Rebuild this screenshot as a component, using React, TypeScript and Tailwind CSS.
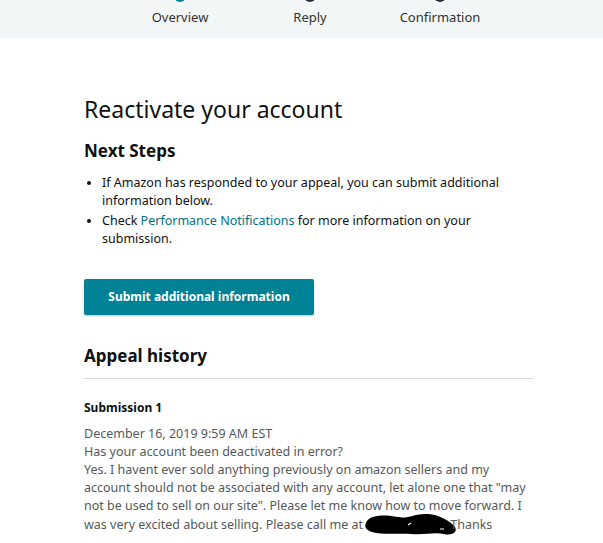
import React from "react";

const steps = [
  { label: "Overview", active: true },
  { label: "Reply", active: false },
  { label: "Confirmation", active: false },
];

function Redaction() {
  return (
    <svg
      className="inline-block align-middle -ml-[2px] -mr-[8px] -mt-[4px]"
      width="94"
      height="26"
      viewBox="0 0 94 26"
    >
      <path
        d="M2 12 C4 4 20 3 34 6 C44 8 52 2 64 3 C76 4 86 10 91 16 C94 21 88 25 80 23 C70 21 60 24 48 23 C34 22 18 24 8 21 C2 19 0 16 2 12 Z"
        fill="#000"
      />
      <path d="M44 14 L47 12" stroke="#fff" strokeWidth="1.2" />
      <path d="M76 18 L80 18" stroke="#fff" strokeWidth="1" />
    </svg>
  );
}

export default function App() {
  return (
    <div
      className="w-full min-h-screen bg-white text-[#0f1111] overflow-hidden"
      style={{ fontFamily: '"Noto Sans", "Open Sans", Arial, sans-serif' }}
    >
      {/* progress header */}
      <div className="h-[38px] bg-[#f3f6f6] flex pl-[115px]">
        {steps.map((s) => (
          <div key={s.label} className="w-[130px] flex flex-col items-center">
            <div
              className={`w-3 h-3 rounded-full -mt-[10px] ${
                s.active ? "bg-[#008296]" : "bg-[#232f3e]"
              }`}
            />
            <div className="mt-[6px] text-[13px] leading-[18px] text-[#333]">{s.label}</div>
          </div>
        ))}
      </div>

      <div className="px-[84px] w-[455px] box-content pt-[55px]">
        <h1 className="text-[23px] leading-[32px] font-normal text-[#111]">Reactivate your account</h1>

        <h2 className="mt-[14px] text-[17px] leading-[24px] font-bold text-[#0f1111]">Next Steps</h2>

        <ul className="mt-[11px] w-[450px] pl-[18px] list-disc text-[12.5px] leading-[18px] text-[#111] space-y-[2px]">
          <li>If Amazon has responded to your appeal, you can submit additional information below.</li>
          <li>
            Check <span className="text-[#007185]">Performance Notifications</span> for more information on your
            submission.
          </li>
        </ul>

        <button className="mt-[31px] w-[230px] h-[36px] rounded-[2px] bg-[#008296] text-white text-[12px] font-bold shadow-[0_1px_2px_rgba(0,0,0,0.25)]">
          Submit additional information
        </button>

        <h2 className="mt-[29px] text-[17px] leading-[24px] font-bold">Appeal history</h2>
        <div className="mt-[10px] border-t border-[#d5d9d9] w-[450px]" />

        <div className="mt-[20px] text-[12px] leading-[18px] font-bold">Submission 1</div>

        <div className="mt-[8px] w-[447px] text-[12.5px] leading-[18px] text-[#565959]">
          <div>December 16, 2019 9:59 AM EST</div>
          <div>Has your account been deactivated in error?</div>
          <div>
            Yes. I havent ever sold anything previously on amazon sellers and my account should not be associated
            with any account, let alone one that "may not be used to sell on our site". Please let me know how to
            move forward. I was very excited about selling. Please call me at <Redaction />Thanks
          </div>
        </div>
      </div>
    </div>
  );
}
